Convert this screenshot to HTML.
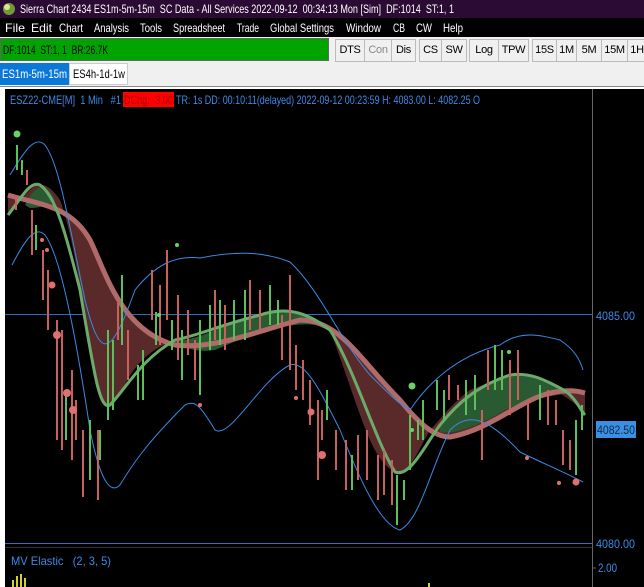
<!DOCTYPE html>
<html><head><meta charset="utf-8"><style>
*{margin:0;padding:0;box-sizing:border-box}
body{width:644px;height:587px;overflow:hidden;background:#f0f0f0;font-family:"Liberation Sans",sans-serif;font-size:12px;position:relative}
.a{position:absolute;white-space:nowrap}
.b{position:absolute;top:39px;height:23px;background:#f0f0f0;border:1px solid #bbb;line-height:21px;text-align:center;color:#000;font-size:11px;letter-spacing:-0.3px}
</style></head><body>
<svg class="a" style="left:0;top:0" width="644" height="87" font-family="Liberation Sans" font-size="12">
<rect x="0" y="0" width="644" height="18" fill="#2b0b33"/>
<circle cx="9" cy="9" r="6" fill="#6f9a3a"/><circle cx="7" cy="7" r="3" fill="#dbe88a"/>
<text x="20" y="13" fill="#fff" textLength="434" lengthAdjust="spacingAndGlyphs">Sierra Chart 2434 ES1m-5m-15m&#160; SC Data - All Services 2022-09-12&#160; 00:34:13 Mon [Sim]&#160; DF:1014&#160; ST:1, 1</text>
<rect x="0" y="18" width="644" height="19" fill="#000"/>
<g fill="#fff">
<text x="5" y="32" textLength="20" lengthAdjust="spacingAndGlyphs">File</text>
<text x="31" y="32" textLength="21" lengthAdjust="spacingAndGlyphs">Edit</text>
<text x="59" y="32" textLength="24" lengthAdjust="spacingAndGlyphs">Chart</text>
<text x="94" y="32" textLength="35" lengthAdjust="spacingAndGlyphs">Analysis</text>
<text x="140" y="32" textLength="22" lengthAdjust="spacingAndGlyphs">Tools</text>
<text x="173" y="32" textLength="52" lengthAdjust="spacingAndGlyphs">Spreadsheet</text>
<text x="237" y="32" textLength="22" lengthAdjust="spacingAndGlyphs">Trade</text>
<text x="270" y="32" textLength="64" lengthAdjust="spacingAndGlyphs">Global Settings</text>
<text x="346" y="32" textLength="35" lengthAdjust="spacingAndGlyphs">Window</text>
<text x="393" y="32" textLength="12" lengthAdjust="spacingAndGlyphs">CB</text>
<text x="416" y="32" textLength="16" lengthAdjust="spacingAndGlyphs">CW</text>
<text x="443" y="32" textLength="20" lengthAdjust="spacingAndGlyphs">Help</text>
</g>
<rect x="0" y="37" width="644" height="50" fill="#f0f0f0"/>
<rect x="0.5" y="38.5" width="328" height="22" fill="#00a400" stroke="#666"/>
<text x="3" y="54" fill="#000" textLength="105" lengthAdjust="spacingAndGlyphs">DF:1014&#160; ST:1, 1&#160; BR:26.7K</text>
<rect x="0" y="63" width="69" height="22" fill="#0a78d7"/>
<text x="2" y="78" fill="#fff" textLength="65" lengthAdjust="spacingAndGlyphs">ES1m-5m-15m</text>
<rect x="69.5" y="63.5" width="58" height="21" fill="#fff" stroke="#ccc"/>
<text x="73" y="78" fill="#000" textLength="52" lengthAdjust="spacingAndGlyphs">ES4h-1d-1w</text>
<line x1="0" y1="86.5" x2="644" y2="86.5" stroke="#888"/>
</svg>
<div class="b" style="left:335px;width:30px">DTS</div>
<div class="b" style="left:364px;width:28px;color:#888">Con</div>
<div class="b" style="left:391px;width:25px">Dis</div>
<div class="b" style="left:419px;width:23px">CS</div>
<div class="b" style="left:441px;width:26px">SW</div>
<div class="b" style="left:469px;width:30px">Log</div>
<div class="b" style="left:498px;width:31px">TPW</div>
<div class="b" style="left:532px;width:25px">15S</div>
<div class="b" style="left:556px;width:21px">1M</div>
<div class="b" style="left:576px;width:26px">5M</div>
<div class="b" style="left:601px;width:27px">15M</div>
<div class="b" style="left:627px;width:20px">1H</div>
<div class="a" style="left:0;top:87px;width:644px;height:500px;background:#fff"></div>
<svg class="a" style="left:5px;top:89px" width="639" height="498" viewBox="5 89 639 498">
<rect x="5" y="89" width="639" height="498" fill="#000"/>
<line x1="592.5" y1="89" x2="592.5" y2="587" stroke="#666"/>
<line x1="5" y1="314.5" x2="592" y2="314.5" stroke="#2a6fc0"/>
<line x1="5" y1="543.5" x2="592" y2="543.5" stroke="#2a6fc0"/>
<line x1="5" y1="547.5" x2="592" y2="547.5" stroke="#333"/>
<path d="M8,195 C40,205 70,205 90,240 C105,270 120,330 175,345 C215,350 260,330 300,320 C340,320 360,360 400,400 C420,425 435,437 450,437 C490,430 520,400 550,393 C565,390 575,390 585,393 L585,415 C575,400 560,395 548,385 C520,370 495,380 470,390 C450,405 440,420 430,430 C418,450 410,475 395,472 C370,460 360,410 330,330 C320,320 300,305 260,315 C220,325 200,340 180,340 C150,345 130,370 120,395 C110,410 100,410 95,380 C85,320 75,240 60,200 C50,185 40,180 30,190 C20,200 12,210 8,215 Z" fill="#5a2a2a"/>
<path d="M180,340 C200,340 220,325 260,315 C300,305 320,320 330,328 C300,318 260,330 215,350 C200,352 190,350 180,345Z" fill="#2a5a32"/>
<path d="M440,425 C460,400 480,385 510,375 C530,372 545,380 560,388 C570,392 578,392 585,393 C560,392 530,400 505,410 C480,425 455,435 440,432Z" fill="#2a5a32"/>
<path d="M25,205 C35,185 45,180 55,200 C50,205 40,208 30,208Z" fill="#2a5a32"/>
<path d="M8,195 C40,205 70,205 90,240 C105,270 120,330 175,345 C215,350 260,330 300,320 C340,320 360,360 400,400 C420,425 435,437 450,437 C490,430 520,400 550,393 C565,390 575,390 585,393" fill="none" stroke="#b06a6a" stroke-width="5"/>
<path d="M8,215 C20,200 30,180 40,185 C55,195 65,230 80,290 C95,380 100,410 110,405 C125,390 140,360 175,340 C200,335 220,325 260,315 C290,305 310,315 330,330 C355,370 375,440 395,472 C410,478 425,445 440,425 C460,400 480,385 510,375 C530,372 545,380 560,388 C575,395 580,410 585,415" fill="none" stroke="#6aaa6a" stroke-width="3"/>
<path d="M10,175 C25,150 35,135 45,145 C60,165 70,230 85,300 C100,360 110,360 135,290 C155,265 175,255 200,258 C230,252 260,250 290,262 C320,290 340,340 370,375 C390,395 400,405 410,410 C430,380 460,355 500,345 C520,330 540,335 560,340 C575,350 580,360 583,370" fill="none" stroke="#3a8ae6" stroke-width="1"/>
<path d="M12,265 C25,240 35,225 45,235 C60,255 75,330 90,430 C100,480 110,495 120,485 C135,460 150,440 185,405 C195,400 200,405 215,430 C230,440 260,380 290,365 C305,360 320,390 340,430 C360,480 380,525 400,530 C420,520 430,470 450,430 C470,410 490,420 520,452 C540,462 560,470 583,482" fill="none" stroke="#3a8ae6" stroke-width="1"/>
<g stroke-width="2">
<g stroke="#c86060">
<line x1="16" y1="195" x2="16" y2="210"/><line x1="27" y1="170" x2="27" y2="185"/><line x1="32" y1="210" x2="32" y2="255"/><line x1="43" y1="250" x2="43" y2="300"/><line x1="48" y1="270" x2="48" y2="330"/><line x1="57" y1="320" x2="57" y2="440"/><line x1="62" y1="330" x2="62" y2="450"/><line x1="72" y1="370" x2="72" y2="460"/><line x1="76" y1="400" x2="76" y2="440"/><line x1="83" y1="430" x2="83" y2="497"/><line x1="98" y1="430" x2="98" y2="500"/><line x1="118" y1="300" x2="118" y2="340"/><line x1="128" y1="330" x2="128" y2="380"/><line x1="152" y1="270" x2="152" y2="320"/><line x1="160" y1="285" x2="160" y2="345"/><line x1="167" y1="250" x2="167" y2="320"/><line x1="178" y1="295" x2="178" y2="360"/><line x1="188" y1="310" x2="188" y2="355"/><line x1="195" y1="340" x2="195" y2="380"/><line x1="215" y1="290" x2="215" y2="340"/><line x1="225" y1="305" x2="225" y2="350"/><line x1="250" y1="280" x2="250" y2="330"/><line x1="260" y1="290" x2="260" y2="330"/><line x1="282" y1="315" x2="282" y2="360"/><line x1="290" y1="275" x2="290" y2="370"/><line x1="296" y1="345" x2="296" y2="390"/><line x1="303" y1="360" x2="303" y2="400"/><line x1="310" y1="380" x2="310" y2="425"/><line x1="318" y1="400" x2="318" y2="480"/><line x1="322" y1="410" x2="322" y2="440"/><line x1="336" y1="430" x2="336" y2="470"/><line x1="346" y1="440" x2="346" y2="490"/><line x1="358" y1="435" x2="358" y2="480"/><line x1="367" y1="430" x2="367" y2="480"/><line x1="378" y1="455" x2="378" y2="500"/><line x1="384" y1="450" x2="384" y2="495"/><line x1="392" y1="460" x2="392" y2="505"/><line x1="449" y1="375" x2="449" y2="400"/><line x1="458" y1="385" x2="458" y2="400"/><line x1="482" y1="410" x2="482" y2="460"/><line x1="488" y1="350" x2="488" y2="390"/><line x1="510" y1="360" x2="510" y2="415"/><line x1="518" y1="350" x2="518" y2="400"/><line x1="528" y1="400" x2="528" y2="440"/><line x1="548" y1="390" x2="548" y2="425"/><line x1="556" y1="400" x2="556" y2="425"/><line x1="563" y1="430" x2="563" y2="465"/><line x1="570" y1="440" x2="570" y2="470"/>
</g>
<g stroke="#5cbf5c">
<line x1="17" y1="145" x2="17" y2="170"/><line x1="22" y1="160" x2="22" y2="175"/><line x1="36" y1="225" x2="36" y2="250"/><line x1="66" y1="390" x2="66" y2="440"/><line x1="90" y1="420" x2="90" y2="480"/><line x1="100" y1="430" x2="100" y2="460"/><line x1="108" y1="330" x2="108" y2="420"/><line x1="113" y1="340" x2="113" y2="410"/><line x1="122" y1="275" x2="122" y2="345"/><line x1="138" y1="365" x2="138" y2="400"/><line x1="143" y1="350" x2="143" y2="400"/><line x1="156" y1="312" x2="156" y2="345"/><line x1="172" y1="320" x2="172" y2="350"/><line x1="182" y1="330" x2="182" y2="380"/><line x1="200" y1="320" x2="200" y2="395"/><line x1="210" y1="305" x2="210" y2="350"/><line x1="220" y1="300" x2="220" y2="345"/><line x1="234" y1="300" x2="234" y2="340"/><line x1="245" y1="290" x2="245" y2="340"/><line x1="270" y1="285" x2="270" y2="325"/><line x1="278" y1="300" x2="278" y2="325"/><line x1="327" y1="390" x2="327" y2="420"/><line x1="352" y1="455" x2="352" y2="490"/><line x1="397" y1="475" x2="397" y2="525"/><line x1="404" y1="480" x2="404" y2="500"/><line x1="410" y1="415" x2="410" y2="470"/><line x1="418" y1="420" x2="418" y2="440"/><line x1="423" y1="400" x2="423" y2="440"/><line x1="437" y1="380" x2="437" y2="410"/><line x1="444" y1="390" x2="444" y2="420"/><line x1="466" y1="380" x2="466" y2="415"/><line x1="475" y1="375" x2="475" y2="410"/><line x1="495" y1="345" x2="495" y2="390"/><line x1="502" y1="350" x2="502" y2="390"/><line x1="540" y1="385" x2="540" y2="420"/><line x1="576" y1="420" x2="576" y2="475"/><line x1="582" y1="405" x2="582" y2="430"/>
</g>
</g>
<g fill="#e07070"><circle cx="42" cy="240" r="2"/><circle cx="47" cy="250" r="2"/><circle cx="52" cy="285" r="3.5"/><circle cx="57" cy="335" r="4"/><circle cx="67" cy="393" r="4"/><circle cx="73" cy="410" r="4"/><circle cx="200" cy="405" r="2"/><circle cx="296" cy="398" r="2"/><circle cx="311" cy="412" r="3.5"/><circle cx="322" cy="455" r="4"/><circle cx="527" cy="458" r="2"/><circle cx="559" cy="483" r="2"/><circle cx="576" cy="482" r="3.5"/></g>
<g fill="#6ad06a"><circle cx="17" cy="134" r="3.5"/><circle cx="177" cy="245" r="2"/><circle cx="159" cy="315" r="2"/><circle cx="412" cy="386" r="3.5"/><circle cx="412" cy="430" r="2"/><circle cx="509" cy="352" r="2"/></g>
<g fill="#d4d420"><rect x="12" y="580" width="2" height="7"/><rect x="16" y="576" width="2" height="11"/><rect x="20" y="574" width="2" height="13"/><rect x="24" y="578" width="2" height="9"/><rect x="428" y="583" width="2" height="4"/></g>
<rect x="596" y="421" width="40" height="17" fill="#3b8fe0"/>
<g font-family="Liberation Sans" font-size="12" fill="#3b8ae6">
<text x="10" y="104" textLength="111" lengthAdjust="spacingAndGlyphs">ESZ22-CME[M]&#160; 1 Min&#160;&#160; #1</text>
<rect x="123" y="92" width="51" height="15" fill="#f00"/>
<text x="124" y="104" fill="#aa0000" textLength="49" lengthAdjust="spacingAndGlyphs">DChg: -3.00</text>
<text x="176" y="104" textLength="304" lengthAdjust="spacingAndGlyphs">TR: 1s DD: 00:10:11(delayed) 2022-09-12 00:23:59 H: 4083.00 L: 4082.25 O</text>
<text x="596" y="320" textLength="39" lengthAdjust="spacingAndGlyphs">4085.00</text>
<text x="597" y="434" fill="#0a2a50" textLength="38" lengthAdjust="spacingAndGlyphs">4082.50</text>
<text x="596" y="548" textLength="39" lengthAdjust="spacingAndGlyphs">4080.00</text>
<text x="598" y="572" textLength="19" lengthAdjust="spacingAndGlyphs">2.00</text>
<text x="11" y="565" textLength="100" lengthAdjust="spacingAndGlyphs">MV Elastic&#160;&#160; (2, 3, 5)</text>
</g>
<line x1="592" y1="568" x2="596" y2="568" stroke="#666"/>
</svg>
</body></html>
